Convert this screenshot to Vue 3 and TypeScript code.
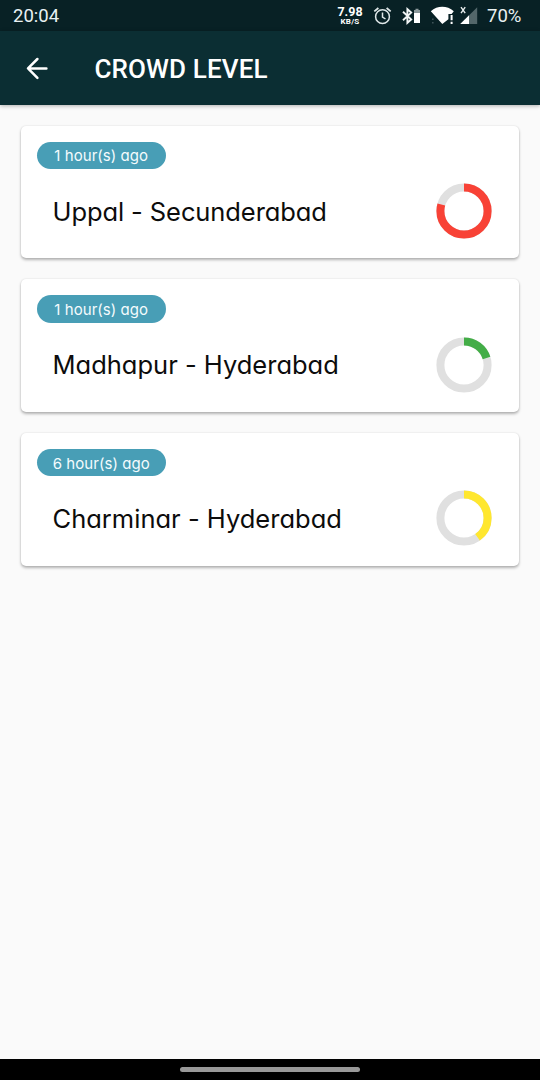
<script setup lang="ts">
interface Route {
  name: string
  age: string
  level: number
  color: string
  fit: string
}

const routes: Route[] = [
  { name: 'Uppal - Secunderabad', age: '1 hour(s) ago', level: 0.79, color: '#f84236', fit: 'uppal' },
  { name: 'Madhapur - Hyderabad', age: '1 hour(s) ago', level: 0.2, color: '#43ad47', fit: 'madhapur' },
  { name: 'Charminar - Hyderabad', age: '6 hour(s) ago', level: 0.4, color: '#ffe72f', fit: 'charminar' },
]

const radius = 23.6
const circumference = 2 * Math.PI * radius
const dash = (level: number): string => `${level * circumference} ${circumference}`
</script>

<template>
  <div class="screen">
    <header class="status">
      <span class="clock">20:04</span>
      <div class="speed"><span class="rate">7.98</span><span class="unit">KB/S</span></div>
      <svg class="icons" width="108" height="31" viewBox="372 0 108 31">
        <g fill="none" stroke="#dfe7e8" stroke-width="1.5">
          <circle cx="382.5" cy="16.7" r="6.9" />
          <path d="M382.5 12.4v4.6l3 2" />
          <path d="M374.3 11.4l4.1-3.4M390.7 11.4L386.6 8" stroke-width="1.8" />
        </g>
        <path d="M403 11.8l8.2 7.6-3.8 3.4V9.2l3.8 3.4L403 20.2" fill="none" stroke="#f2f6f6" stroke-width="1.9" />
        <path d="M414 12.5h6V23h-6z" fill="#fff" />
        <path d="M414 10h1.5V8.8h3V10h1.5v2.5h-6z" fill="#8b999b" />
        <path d="M430.8 11.2C437.5 5.4 447 5.4 453.8 11.2L451.6 14h-3.2v5.2L442.3 24z" fill="#fff" />
        <path d="M450.6 15h2v5.3h-2zM450.6 21.7h2v2.3h-2z" fill="#fff" />
        <path d="M432 18.5h1.6v1.6H432zM432 22h1.6v1.6H432z" fill="#3d5357" />
        <path d="M477.2 7.3V24h-8.3v-8.4z" fill="#53676a" />
        <path d="M469 15.2V24h-8.8z" fill="#fff" />
        <path d="M461 7.2l4.2 6M465.2 7.2l-4.2 6" stroke="#e9eeee" stroke-width="1.4" />
      </svg>
      <span class="battery">70%</span>
    </header>
    <nav class="bar">
      <svg class="back" width="24" height="24" viewBox="0 0 24 24">
        <path d="M21.4 12.4H3.2M12.4 3L3 12.4l9.4 9.4" fill="none" stroke="#fff" stroke-width="2.5" stroke-linecap="round" stroke-linejoin="round" />
      </svg>
      <h1>CROWD LEVEL</h1>
    </nav>
    <main class="list">
      <article v-for="route in routes" :key="route.name" class="card">
        <span class="chip">{{ route.age }}</span>
        <div class="row">
          <span class="name" :class="route.fit">{{ route.name }}</span>
          <svg class="ring" width="56" height="56" viewBox="-28 -28 56 56">
            <circle :r="radius" class="track" />
            <circle :r="radius" class="value" :stroke="route.color" :stroke-dasharray="dash(route.level)" transform="rotate(-90)" />
          </svg>
        </div>
      </article>
    </main>
    <footer class="gesture"><span class="handle"></span></footer>
  </div>
</template>

<style>
body {
  margin: 0;
}
</style>

<style scoped>
.screen {
  width: 540px;
  height: 1080px;
  display: flex;
  flex-direction: column;
  background: #fafafa;
  overflow: hidden;
}
.status {
  height: 31px;
  flex: none;
  box-sizing: border-box;
  padding: 0 0 0 13px;
  display: flex;
  align-items: center;
  background: #082125;
  color: #e9f1f2;
  font-family: Roboto, sans-serif;
  font-size: 18.5px;
}
.clock {
  width: 323px;
}
.speed {
  width: 28px;
  display: flex;
  flex-direction: column;
  align-items: center;
  font-weight: 700;
  color: #fff;
}
.rate {
  font-size: 12.5px;
  line-height: 12px;
}
.unit {
  font-size: 8px;
  line-height: 8px;
  letter-spacing: 0.2px;
}
.icons {
  flex: none;
  margin-left: 8px;
}
.battery {
  margin-left: 7px;
}
.bar {
  height: 74px;
  flex: none;
  display: flex;
  align-items: center;
  background: #0b2e33;
  box-shadow: 0 1px 4px rgba(0, 0, 0, 0.3);
}
.back {
  margin-left: 25px;
}
h1 {
  margin: 2px 0 0 45.5px;
  color: #fff;
  font: 500 26px/30px Roboto, sans-serif;
  letter-spacing: 0.12px;
}
.list {
  flex: 1;
  display: flex;
  flex-direction: column;
  gap: 21px;
  padding: 20.5px 21px;
}
.card {
  height: 132.7px;
  box-sizing: border-box;
  padding: 16px 27.5px 0 16px;
  border-radius: 5px;
  background: #fff;
  box-shadow: 0 2px 3px rgba(0, 0, 0, 0.28), 0 0 2px rgba(0, 0, 0, 0.12);
}
.chip {
  display: flex;
  align-items: center;
  justify-content: center;
  width: 128.5px;
  height: 27.5px;
  box-sizing: border-box;
  padding-top: 2px;
  border-radius: 14px;
  background: #489eb6;
  color: #f4fbfd;
  font-family: Inter, sans-serif;
  font-feature-settings: 'cv11' 1, 'calt' 0;
  font-size: 15px;
  letter-spacing: 0.05px;
  line-height: 20px;
  white-space: nowrap;
}
.row {
  display: flex;
  align-items: center;
  justify-content: space-between;
  height: 56px;
  margin-top: 14px;
  padding-left: 15.5px;
}
.name {
  font-family: Inter, sans-serif;
  font-feature-settings: 'cv11' 1, 'calt' 0;
  font-size: 25.5px;
  color: #0c0c0c;
  white-space: nowrap;
}
.uppal {
  letter-spacing: -0.09px;
}
.charminar {
  letter-spacing: 0.01px;
}
.ring {
  flex: none;
}
.ring circle {
  fill: none;
  stroke-width: 8;
}
.track {
  stroke: #e0e0e0;
}
.gesture {
  height: 21px;
  flex: none;
  display: flex;
  align-items: center;
  justify-content: center;
  background: #000;
}
.handle {
  width: 180px;
  height: 5px;
  border-radius: 3px;
  background: #999;
}
</style>
